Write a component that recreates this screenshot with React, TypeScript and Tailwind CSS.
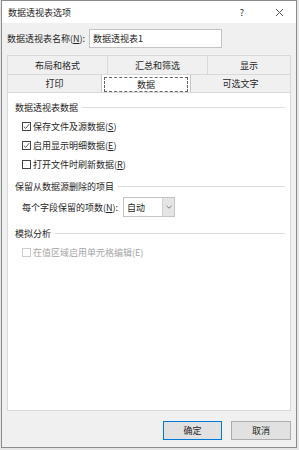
import React from "react";

const font = { fontFamily: '"Microsoft YaHei", "Noto Sans CJK SC", sans-serif' };

function Check({ label, u, checked, disabled }: { label: string; u?: string; checked?: boolean; disabled?: boolean }) {
  return (
    <div className={`flex items-center h-[19px] pl-[14px] ${disabled ? "text-[#a6a6a6]" : "text-[#262626]"}`}>
      <span className={`w-[9px] h-[9px] border ${disabled ? "border-[#cccccc]" : "border-[#444]"} bg-white flex items-center justify-center mr-[2px]`}>
        {checked && (
          <svg width="7" height="7" viewBox="0 0 7 7">
            <path d="M0.8 3.6 L2.7 5.4 L6.2 1.2" fill="none" stroke="#444" strokeWidth="0.9" />
          </svg>
        )}
      </span>
      <span>
        {label}
        {u ? (
          <>
            (<span className="underline">{u}</span>)
          </>
        ) : null}
      </span>
    </div>
  );
}

function Header({ text }: { text: string }) {
  return (
    <div className="flex items-center h-[19px] pl-[7px] pr-[5px] text-[#262626]">
      <span className="mr-[4px]">{text}</span>
      <div className="flex-1 h-px bg-[#dcdcdc]" />
    </div>
  );
}

export default function App() {
  return (
    <div style={font} className="w-[299px] h-[450px] bg-[#e6e6e6] pl-[1px] text-[9px] leading-none">
      <div className="w-[296px] h-[448px] border border-[#8c8c8c] bg-[#f0f0f0] flex flex-col">
        {/* title */}
        <div className="h-[22px] bg-white flex items-center pl-[6px] text-[#262626]">
          <span className="flex-1">数据透视表选项</span>
          <span className="w-[10px] text-center mr-[28px]">?</span>
          <svg width="9" height="9" viewBox="0 0 9 9" className="mr-[12px]">
            <path d="M1 1 L8 8 M8 1 L1 8" stroke="#555" strokeWidth="1" />
          </svg>
        </div>

        <div className="px-[5px] flex flex-col">
          {/* name */}
          <div className="mt-[6px] h-[19px] flex items-center text-[#262626]">
            <span className="w-[82px]">
              数据透视表名称(<span className="underline">N</span>):
            </span>
            <div className="w-[133px] h-[19px] bg-white border border-[#c4c4c4] flex items-center pl-[3px]">数据透视表1</div>
          </div>

          {/* tabs */}
          <div className="mt-[7px] flex flex-col text-[#262626]">
            <div className="flex h-[19px] border-t border-x border-[#d9d9d9]">
              <div className="w-[100px] flex items-center justify-center border-r border-[#d9d9d9]">布局和格式</div>
              <div className="w-[100px] flex items-center justify-center border-r border-[#d9d9d9]">汇总和筛选</div>
              <div className="flex-1 flex items-center justify-center">显示</div>
            </div>
            <div className="flex h-[18px] border-t border-x border-[#d9d9d9]">
              <div className="w-[93px] flex items-center justify-center">打印</div>
              <div className="w-[90px] bg-white border-x border-[#c8c8c8] flex items-center justify-center -mb-px">
                <div className="w-[84px] h-[15px] border border-dashed border-[#666] flex items-center justify-center">数据</div>
              </div>
              <div className="flex-1 flex items-center justify-center">可选文字</div>
            </div>
          </div>

          {/* panel */}
          <div className="h-[319px] bg-white border border-[#d9d9d9] pt-[5px]">
            <Header text="数据透视表数据" />
            <Check label="保存文件及源数据" u="S" checked />
            <Check label="启用显示明细数据" u="E" checked />
            <Check label="打开文件时刷新数据" u="R" />
            <div className="h-[3px]" />
            <Header text="保留从数据源删除的项目" />
            <div className="flex items-center h-[22px] pl-[14px] text-[#262626]">
              <span className="w-[101px]">
                每个字段保留的项数(<span className="underline">N</span>):
              </span>
              <div className="w-[52px] h-[20px] border border-[#c4c4c4] bg-white flex">
                <div className="flex-1 flex items-center pl-[3px]">自动</div>
                <div className="w-[12px] bg-[#e5e5e5] border-l border-[#d0d0d0] flex items-center justify-center">
                  <svg width="6" height="4" viewBox="0 0 6 4">
                    <path d="M0.5 0.8 L3 3.2 L5.5 0.8" fill="none" stroke="#666" strokeWidth="0.8" />
                  </svg>
                </div>
              </div>
            </div>
            <div className="h-[6px]" />
            <Header text="模拟分析" />
            <Check label="在值区域启用单元格编辑(E)" disabled />
          </div>

          {/* buttons */}
          <div className="mt-[10px] flex justify-end gap-[9px] text-[#262626]">
            <div className="w-[59px] h-[19px] bg-[#e1e1e1] border border-[#0078d7] flex items-center justify-center">确定</div>
            <div className="w-[60px] h-[19px] bg-[#e1e1e1] border border-[#adadad] flex items-center justify-center">取消</div>
          </div>
        </div>
      </div>
    </div>
  );
}
